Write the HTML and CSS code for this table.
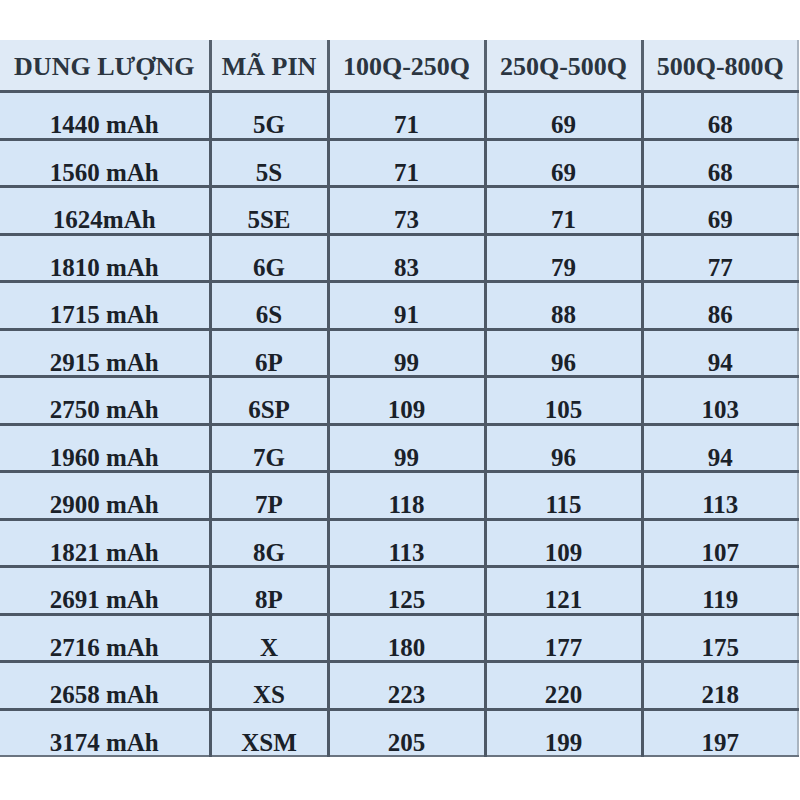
FILE: index.html
```html
<!DOCTYPE html>
<html lang="vi">
<head>
    <meta charset="UTF-8">
    <meta name="viewport" content="width=device-width, initial-scale=1.0">
    <title>Bảng giá pin</title>
    <link rel="stylesheet" href="styles.css">
</head>
<body>
    <table class="bang-gia">
        <colgroup>
            <col class="c-dung-luong">
            <col class="c-ma-pin">
            <col class="c-gia">
            <col class="c-gia">
            <col class="c-gia-cuoi">
        </colgroup>
        <thead>
            <tr>
                <th>DUNG LƯỢNG</th>
                <th>MÃ PIN</th>
                <th>100Q-250Q</th>
                <th>250Q-500Q</th>
                <th>500Q-800Q</th>
            </tr>
        </thead>
        <tbody>
            <tr><td>1440 mAh</td><td>5G</td><td>71</td><td>69</td><td>68</td></tr>
            <tr><td>1560 mAh</td><td>5S</td><td>71</td><td>69</td><td>68</td></tr>
            <tr><td>1624mAh</td><td>5SE</td><td>73</td><td>71</td><td>69</td></tr>
            <tr><td>1810 mAh</td><td>6G</td><td>83</td><td>79</td><td>77</td></tr>
            <tr><td>1715 mAh</td><td>6S</td><td>91</td><td>88</td><td>86</td></tr>
            <tr><td>2915 mAh</td><td>6P</td><td>99</td><td>96</td><td>94</td></tr>
            <tr><td>2750 mAh</td><td>6SP</td><td>109</td><td>105</td><td>103</td></tr>
            <tr><td>1960 mAh</td><td>7G</td><td>99</td><td>96</td><td>94</td></tr>
            <tr><td>2900 mAh</td><td>7P</td><td>118</td><td>115</td><td>113</td></tr>
            <tr><td>1821 mAh</td><td>8G</td><td>113</td><td>109</td><td>107</td></tr>
            <tr><td>2691 mAh</td><td>8P</td><td>125</td><td>121</td><td>119</td></tr>
            <tr><td>2716 mAh</td><td>X</td><td>180</td><td>177</td><td>175</td></tr>
            <tr><td>2658 mAh</td><td>XS</td><td>223</td><td>220</td><td>218</td></tr>
            <tr><td>3174 mAh</td><td>XSM</td><td>205</td><td>199</td><td>197</td></tr>
        </tbody>
    </table>
</body>
</html>
```

FILE: styles.css
```css
body {
    margin: 0;
    background-color: #fff;
    font-family: "Liberation Serif", "Times New Roman", serif;
}
.bang-gia {
    margin-top: 40px;
    width: 798px;
    border-collapse: collapse;
    table-layout: fixed;
    background-color: #d6e6f7;
    color: #1a2129;
}
.c-dung-luong { width: 210px; }
.c-ma-pin { width: 118px; }
.c-gia { width: 157px; }
.c-gia-cuoi { width: 156px; }
.bang-gia th,
.bang-gia td {
    border: 3px solid #4d5866;
    text-align: center;
    font-weight: bold;
    padding: 0;
    font-size: 25px;
}
.bang-gia th:first-child,
.bang-gia td:first-child {
    border-left: none;
}
.bang-gia th {
    height: 47px;
    padding-top: 3px;
    background-color: #dfeaf6;
    color: #2b3540;
    font-size: 26px;
    border-top: none;
    border-right-color: #56616e;
}
.bang-gia th:last-child,
.bang-gia td:last-child {
    border-right: 2px solid #a9b4c0;
}
.bang-gia td {
    height: 24.5px;
    line-height: 24px;
    padding-top: 20px;
}
.bang-gia tbody tr:last-child td {
    border-bottom: 2px solid #6a7480;
}
```
